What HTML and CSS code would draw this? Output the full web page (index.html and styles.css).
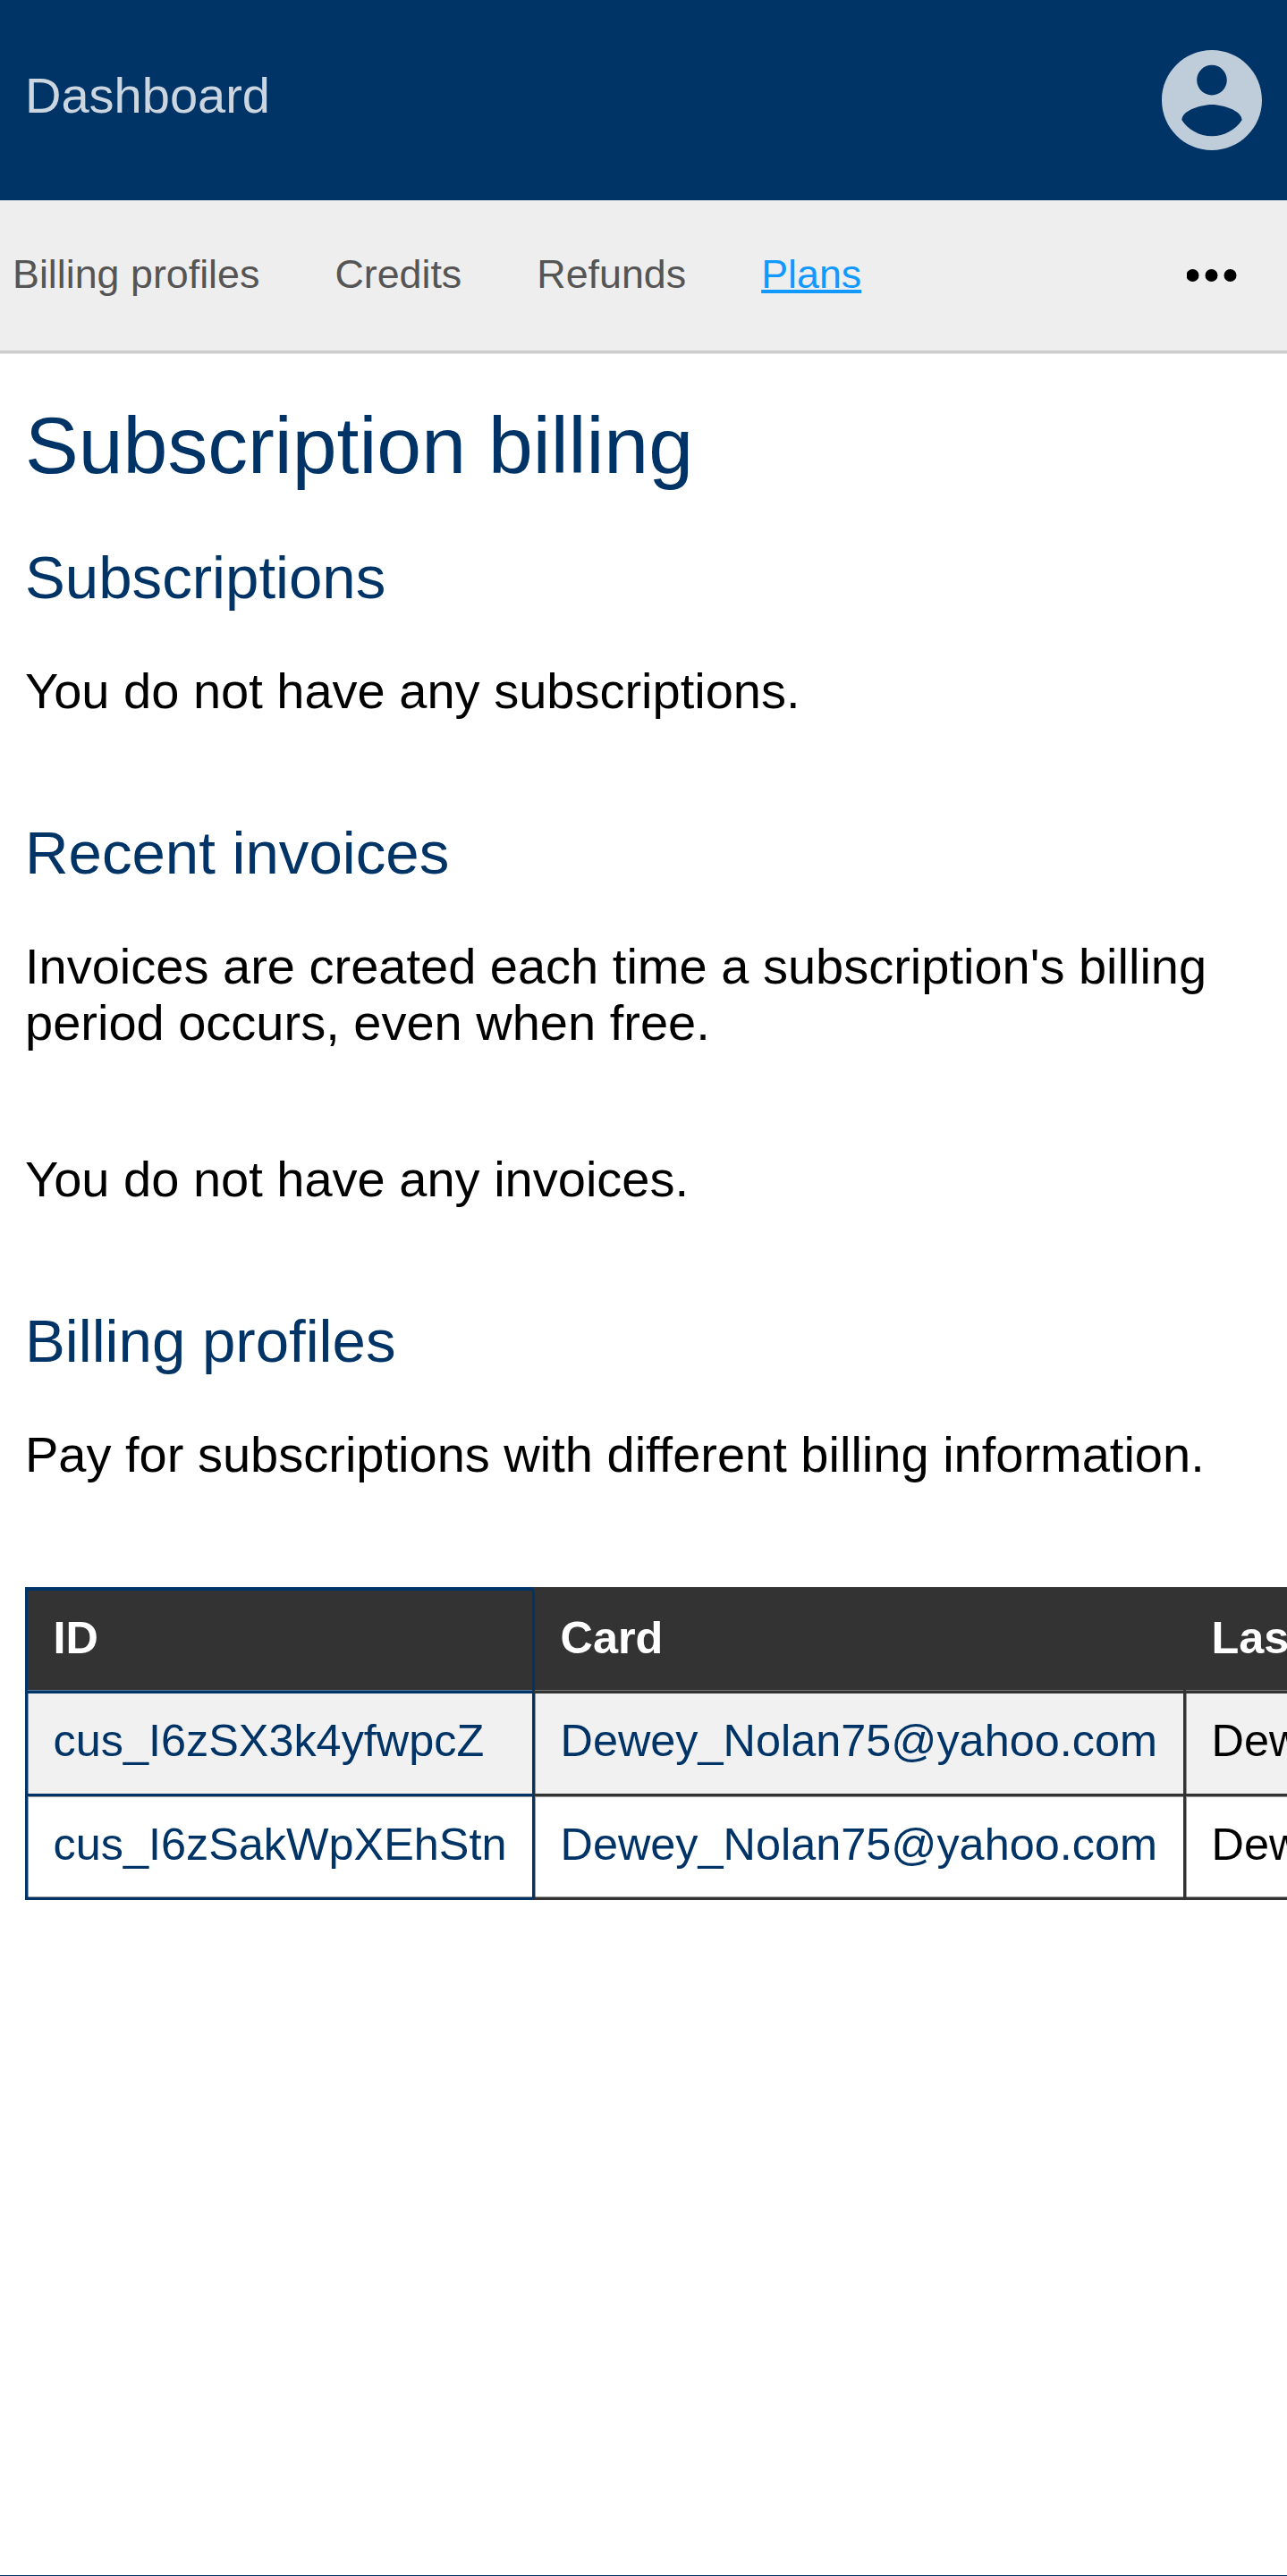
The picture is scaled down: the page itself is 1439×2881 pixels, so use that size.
FILE: index.html
```html
<!DOCTYPE html>
<html lang="en">
<head>
<meta charset="utf-8">
<title>Subscription billing</title>
<link rel="stylesheet" href="styles.css">
</head>
<body>
<header class="topbar">
  <a class="brand">Dashboard</a>
  <svg class="avatar" viewBox="2 2 20 20" aria-label="Account"><path d="M12 2C6.48 2 2 6.48 2 12s4.48 10 10 10 10-4.48 10-10S17.52 2 12 2zm0 3c1.66 0 3 1.34 3 3s-1.34 3-3 3-3-1.34-3-3 1.34-3 3-3zm0 14.2c-2.5 0-4.71-1.28-6-3.22.03-1.99 4-3.08 6-3.08 1.99 0 5.97 1.09 6 3.08-1.29 1.94-3.5 3.22-6 3.22z"/></svg>
</header>
<nav class="navbar">
  <a>Billing profiles</a>
  <a>Credits</a>
  <a>Refunds</a>
  <a class="active">Plans</a>
  <svg class="more" viewBox="0 0 56 14" aria-label="More"><circle cx="6.5" cy="7" r="7"/><circle cx="27.5" cy="7" r="7"/><circle cx="48.5" cy="7" r="7"/></svg>
</nav>
<main class="content">
  <h1>Subscription billing</h1>
  <section>
    <h2>Subscriptions</h2>
    <p>You do not have any subscriptions.</p>
  </section>
  <section>
    <h2>Recent invoices</h2>
    <p>Invoices are created each time a subscription's billing period occurs, even when free.</p>
    <p class="empty">You do not have any invoices.</p>
  </section>
  <section>
    <h2>Billing profiles</h2>
    <p>Pay for subscriptions with different billing information.</p>
    <table class="profiles">
      <thead>
        <tr><th>ID</th><th>Card</th><th>Last name</th></tr>
      </thead>
      <tbody>
        <tr><td><a>cus_I6zSX3k4yfwpcZ</a></td><td><a>Dewey_Nolan75@yahoo.com</a></td><td>Dewey</td></tr>
        <tr><td><a>cus_I6zSakWpXEhStn</a></td><td><a>Dewey_Nolan75@yahoo.com</a></td><td>Dewey</td></tr>
      </tbody>
    </table>
  </section>
</main>
</body>
</html>
```
FILE: styles.css
```css
* { box-sizing: border-box; }
html { overflow: hidden; }
body {
  margin: 0;
  height: 2881px;
  overflow: hidden;
  display: flex;
  flex-direction: column;
  background: #fff;
  border-bottom: 1px solid #036;
  color: #000;
  font: 56px/63px "Liberation Sans", Arial, sans-serif;
}
h1, h2, p { margin: 0; font-weight: 400; }

.topbar {
  flex: none;
  height: 224px;
  padding: 0 28px;
  display: flex;
  align-items: center;
  justify-content: space-between;
  background: #036;
}
.brand { color: #ccd6e0; padding-bottom: 11px; }
.avatar { width: 112px; height: 112px; fill: #bfccd9; }

.navbar {
  flex: none;
  height: 172px;
  padding: 0 56px 4px 14px;
  display: flex;
  align-items: center;
  gap: 84px;
  background: #eee;
  box-shadow: inset 0 -1px #e5e5e5, inset 0 -4px #ccc;
  color: #555;
  font-size: 44.8px;
  line-height: 52px;
}
.navbar a { padding-bottom: 4px; }
.navbar .active {
  color: #19f;
  text-decoration: underline;
  text-decoration-thickness: 4px;
}
.more { width: 56px; height: 14px; margin-left: auto; fill: #000; }

.content { flex: 1; min-height: 0; padding: 51px 28px 0; overflow: hidden; }
h1 { color: #036; font-size: 89.6px; line-height: 102px; }
h2 { color: #036; font-size: 67.2px; line-height: 77px; margin: 58px 0 57px; }
section + section h2 { margin-top: 111px; }
.empty { margin-top: 112px; }

.profiles {
  margin-top: 117px;
  width: 1700px;
  table-layout: fixed;
  border-collapse: separate;
  border-spacing: 0;
  font-size: 50.4px;
  line-height: 56px;
}
.profiles th, .profiles td {
  height: 116px;
  padding: 0 28px 6px 28.5px;
  border: 0 solid #333;
  border-width: 3px 0 0 3px;
  text-align: left;
  box-shadow: inset 1px 1px rgba(51, 51, 51, .5);
}
.profiles th {
  padding-bottom: 7px;
  background: #333;
  color: #fff;
  border-top-width: 4px;
  box-shadow: inset 0 -1px #777;
}
.profiles th:nth-child(1) { width: 567px; box-shadow: inset 0 -1px #567a9c; }
.profiles th:nth-child(2) { width: 728px; }
.profiles th:nth-child(1), .profiles td:nth-child(1) { border-color: #036; }
.profiles th:nth-child(2), .profiles td:nth-child(2) { border-left-color: #036; }
.profiles tbody tr:first-child td { height: 115px; padding-bottom: 7px; background: #f1f1f1; box-shadow: inset 1px 0 rgba(51, 51, 51, .5); }
.profiles tbody tr:last-child td { height: 119px; border-bottom-width: 3px; box-shadow: inset 1px 1px rgba(51, 51, 51, .5), inset 0 -1px rgba(51, 51, 51, .5); }
.profiles a { color: #036; }
```
